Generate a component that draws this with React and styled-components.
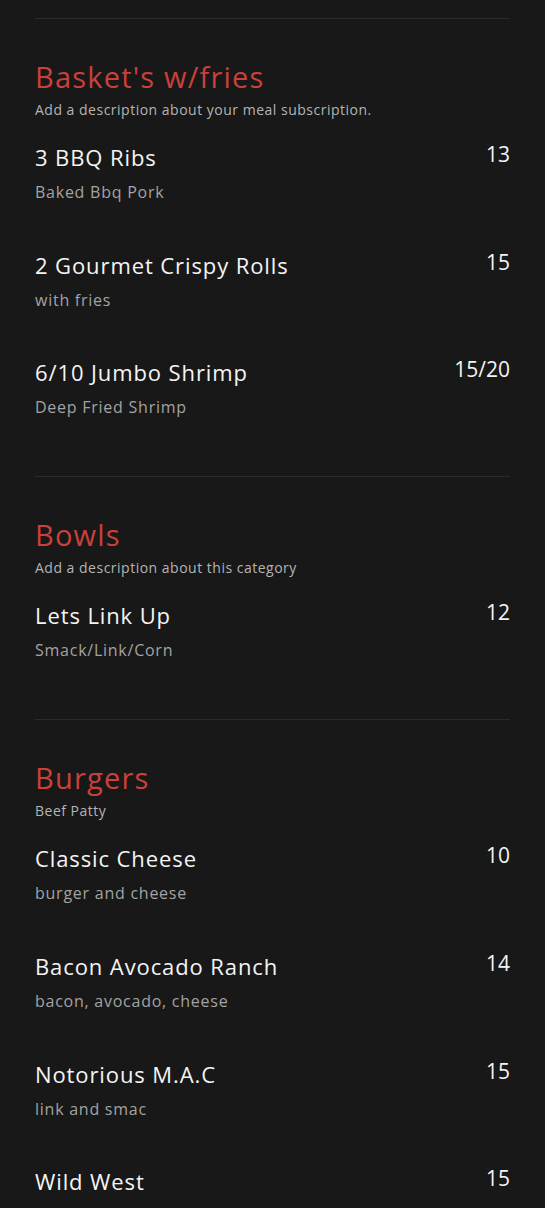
import React from "react";
import styled, { createGlobalStyle } from "styled-components";

const GlobalStyle = createGlobalStyle`
  html, body {
    margin: 0;
    padding: 0;
    background-color: #181818;
  }
  body {
    font-family: "Open Sans", "Liberation Sans", sans-serif;
    -webkit-font-smoothing: antialiased;
  }
`;

const menu = [
  {
    title: "Basket's w/fries",
    description: "Add a description about your meal subscription.",
    items: [
      { name: "3 BBQ Ribs", price: "13", sub: "Baked Bbq Pork" },
      { name: "2 Gourmet Crispy Rolls", price: "15", sub: "with fries" },
      { name: "6/10 Jumbo Shrimp", price: "15/20", sub: "Deep Fried Shrimp" },
    ],
  },
  {
    title: "Bowls",
    description: "Add a description about this category",
    items: [{ name: "Lets Link Up", price: "12", sub: "Smack/Link/Corn" }],
  },
  {
    title: "Burgers",
    description: "Beef Patty",
    items: [
      { name: "Classic Cheese", price: "10", sub: "burger and cheese" },
      { name: "Bacon Avocado Ranch", price: "14", sub: "bacon, avocado, cheese" },
      { name: "Notorious M.A.C", price: "15", sub: "link and smac" },
      { name: "Wild West", price: "15" },
    ],
  },
];

export default function App() {
  return (
    <>
      <GlobalStyle />
      <MenuPage>
        {menu.map((section) => (
          <Section key={section.title}>
            <SectionTitle>{section.title}</SectionTitle>
            <SectionDescription>{section.description}</SectionDescription>
            <ItemList>
              {section.items.map((item) => (
                <Item key={item.name}>
                  <ItemHead>
                    <ItemName>{item.name}</ItemName>
                    <ItemPrice>{item.price}</ItemPrice>
                  </ItemHead>
                  {item.sub && <ItemSub>{item.sub}</ItemSub>}
                </Item>
              ))}
            </ItemList>
          </Section>
        ))}
      </MenuPage>
    </>
  );
}

const MenuPage = styled.main`
  padding: 18px 35px 0 35px;
  min-height: 1208px;
  box-sizing: border-box;
`;

const Section = styled.section`
  border-top: 1px solid #2b2b2b;
  padding-top: 40px;
  padding-bottom: 58px;
`;

const SectionTitle = styled.h2`
  margin: 0;
  color: #c9413a;
  font-size: 29px;
  line-height: 36px;
  font-weight: 400;
  letter-spacing: 1.2px;
`;

const SectionDescription = styled.p`
  margin: 5px 0 0 0;
  color: #b4b4b4;
  font-size: 14px;
  line-height: 20px;
  letter-spacing: 0.5px;
`;

const ItemList = styled.div`
  display: flex;
  flex-direction: column;
  gap: 47.7px;
  margin-top: 23px;
`;

const Item = styled.div`
  display: flex;
  flex-direction: column;
  gap: 10px;
`;

const ItemHead = styled.div`
  display: flex;
  justify-content: space-between;
  align-items: flex-start;
`;

const ItemName = styled.div`
  color: #f4f4f4;
  font-size: 22px;
  line-height: 28px;
  letter-spacing: 0.9px;
`;

const ItemPrice = styled.div`
  color: #f4f4f4;
  font-size: 21px;
  line-height: 23px;
`;

const ItemSub = styled.div`
  color: #a3a3a3;
  font-size: 16px;
  line-height: 22px;
  letter-spacing: 0.75px;
`;
